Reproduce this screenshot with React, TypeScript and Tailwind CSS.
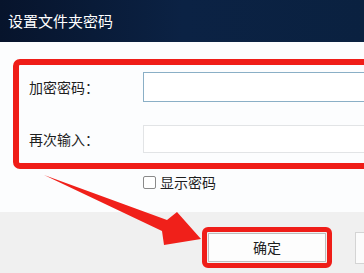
import React from "react";

const cjk = { fontFamily: '"Noto Sans CJK SC", "Noto Sans", sans-serif' };

const Arrow = () => (
  <svg
    className="absolute left-0 top-0 pointer-events-none"
    width={364}
    height={273}
    viewBox="0 0 364 273"
  >
    <polygon
      points="44,175 167,220 177,212 201,239 164,245 162,231"
      fill="#f0201a"
    />
  </svg>
);

export default function App() {
  return (
    <div
      className="relative w-[364px] h-[273px] overflow-hidden bg-[#fcfdfe] flex flex-col"
      style={cjk}
    >
      {/* title bar */}
      <div className="h-[42px] shrink-0 flex items-center pl-[8px] bg-gradient-to-r from-[#07142c] via-[#0b2244] to-[#0a2140] text-white text-[15px]">
        设置文件夹密码
      </div>

      {/* red highlighted fields */}
      <div className="pt-[17px] pl-[13px]">
        <div className="w-[362px] border-[6px] border-[#ef1d18] rounded-[7px] pt-[7px] pb-[10px] flex flex-col gap-[23px]">
          <div className="flex items-center h-[30px]">
            <div className="w-[124px] pl-[10px] text-[14px] text-[#1e1e1e]">加密密码：</div>
            <div className="flex-1 h-[30px] border border-[#8aafc6] bg-white" />
          </div>
          <div className="flex items-center h-[28px]">
            <div className="w-[124px] pl-[10px] text-[14px] text-[#1e1e1e]">再次输入：</div>
            <div className="flex-1 h-[28px] border border-[#e2e4e6] bg-white" />
          </div>
        </div>
      </div>

      {/* show password */}
      <div className="flex items-center pl-[143px] mt-[6px] h-[14px]">
        <div className="w-[13px] h-[13px] border border-[#8a8a8a] rounded-[2px] bg-white" />
        <span className="ml-[4px] text-[14px] text-[#1e1e1e] leading-none">显示密码</span>
      </div>

      {/* footer */}
      <div className="mt-[23px] flex-1 bg-[#f0f0f0] flex items-start pt-[15px] pl-[202px] gap-[23px]">
        <div className="w-[130px] h-[41px] border-[5px] border-[#ef1d18] rounded-[6px] p-[1px] shrink-0">
          <div className="w-full h-full border border-[#bdbdbd] bg-[#fdfdfd] flex items-center justify-center text-[14px] text-[#1e1e1e]">
            确定
          </div>
        </div>
        <div className="mt-[5px] w-[60px] h-[32px] border border-[#d4d4d4] bg-[#fbfbfb] shrink-0" />
      </div>

      <Arrow />
    </div>
  );
}
